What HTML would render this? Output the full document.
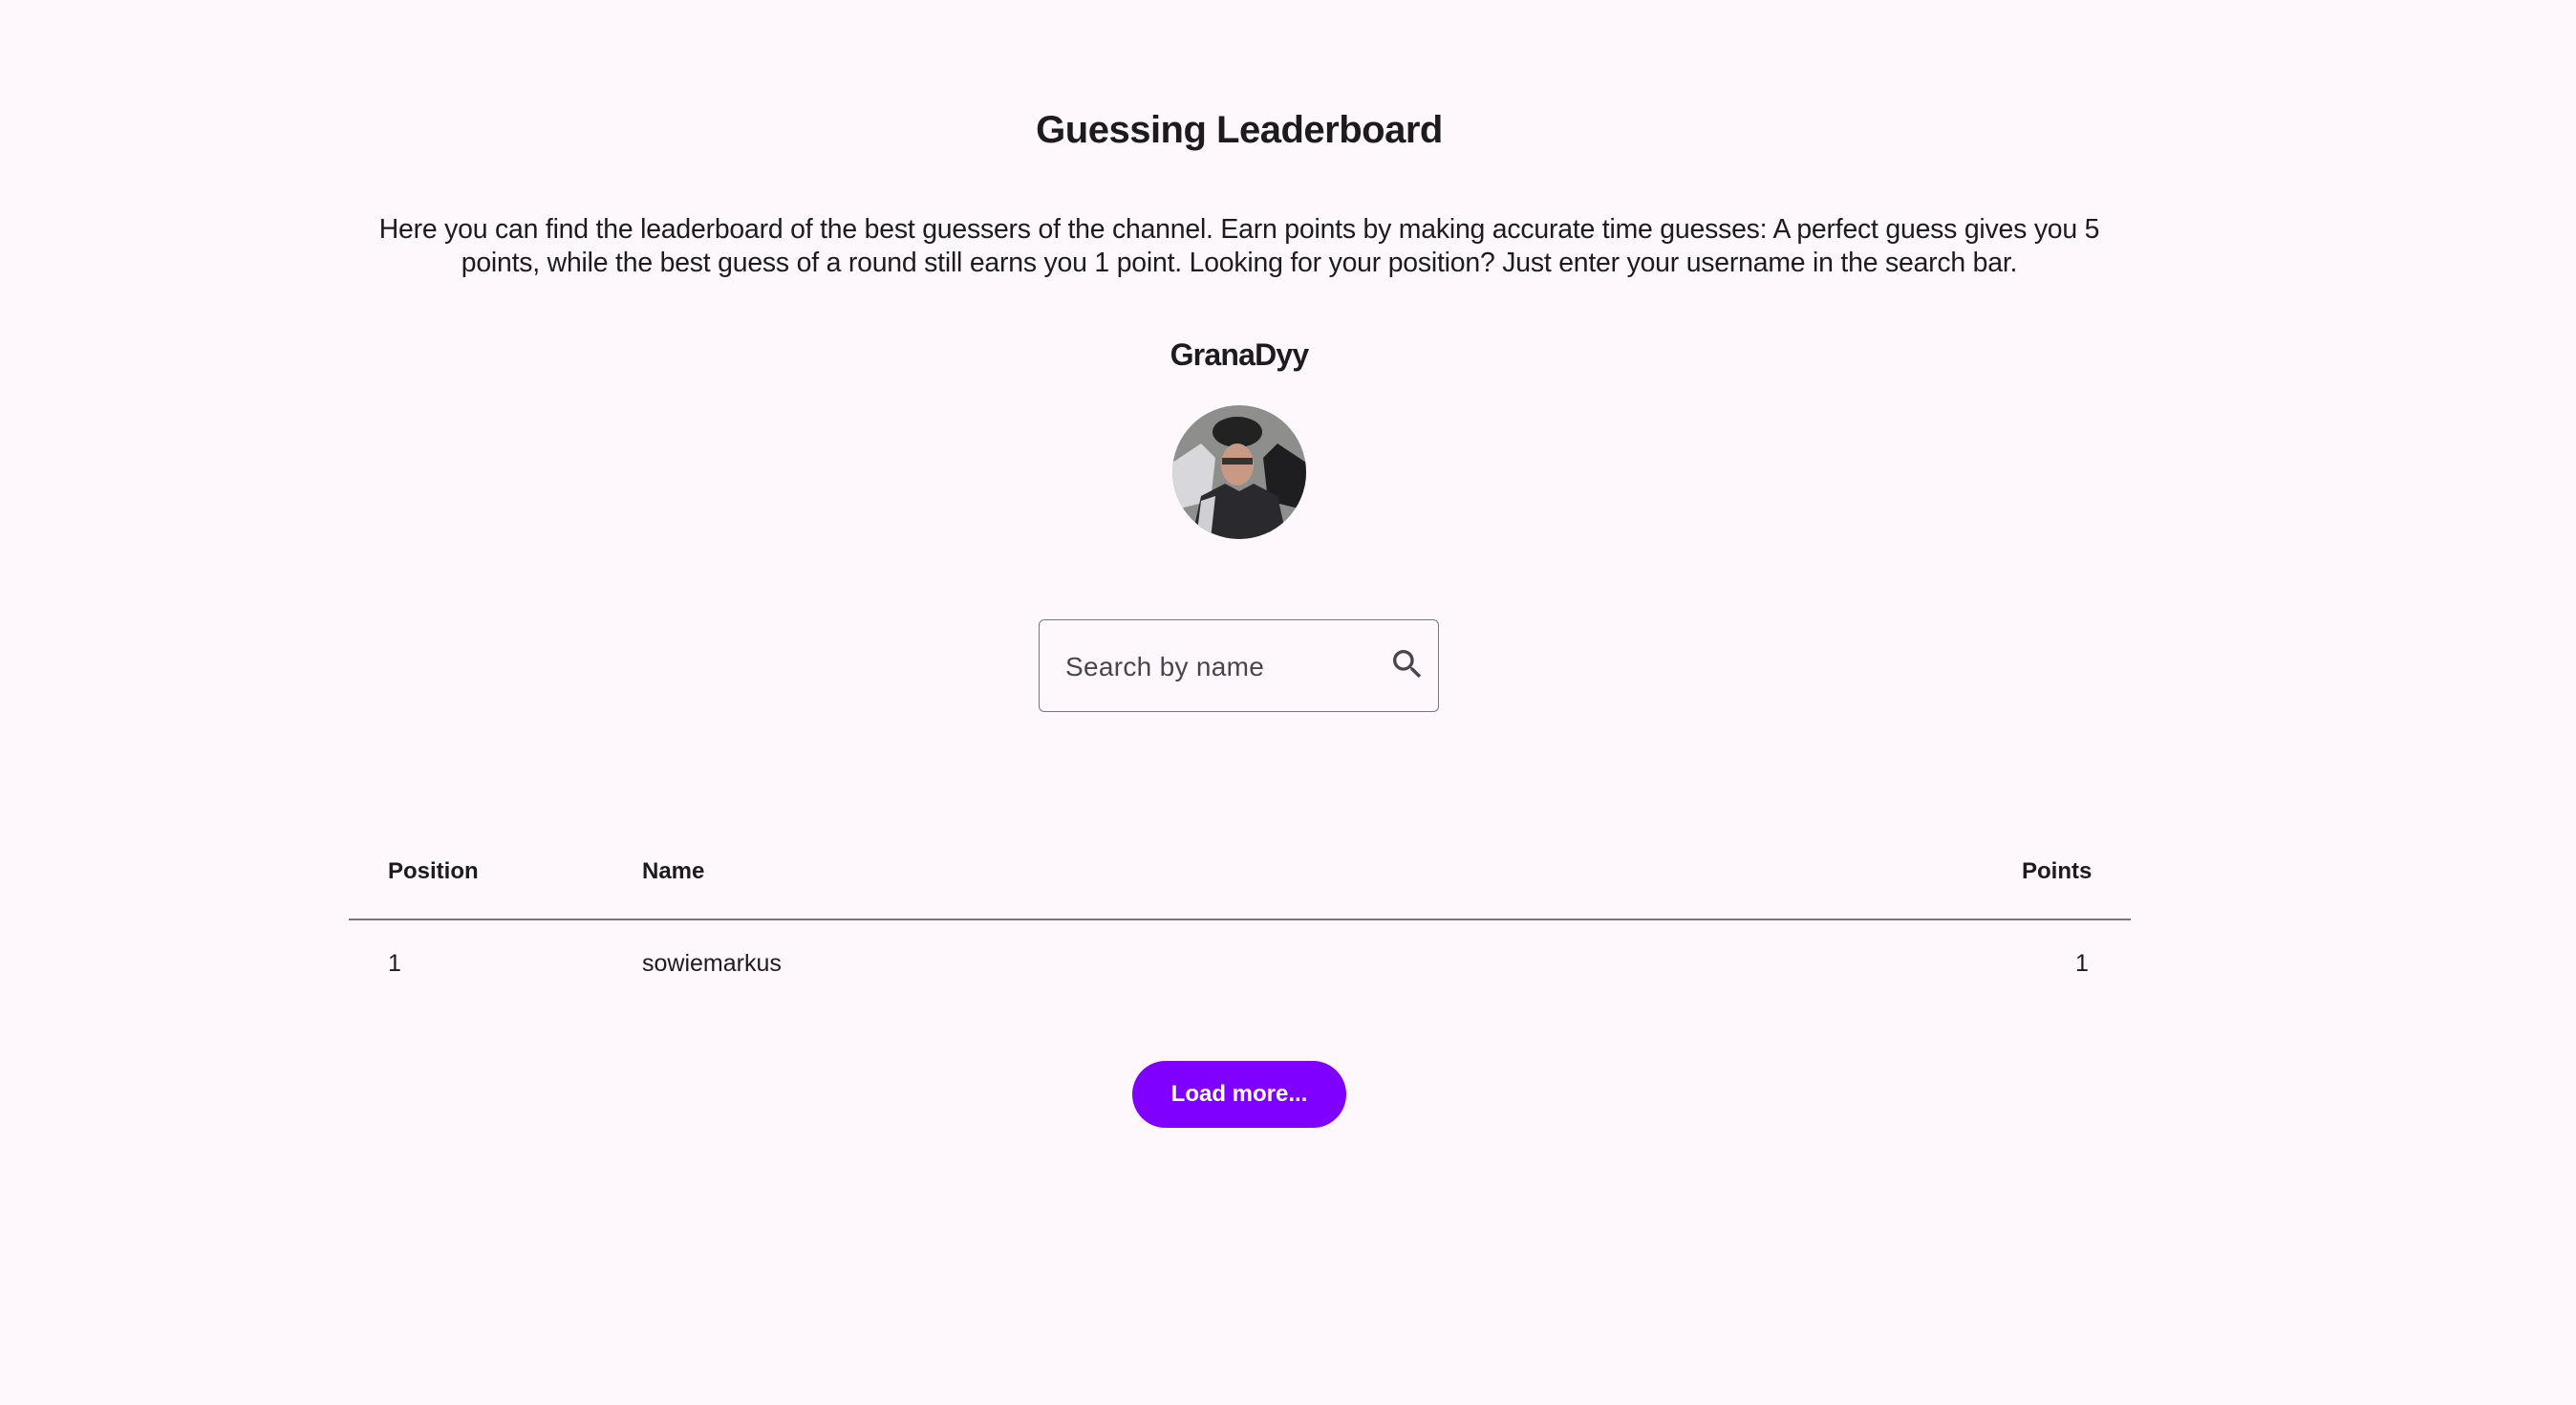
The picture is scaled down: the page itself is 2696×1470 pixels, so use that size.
<!DOCTYPE html>
<html><head><meta charset="utf-8"><style>
html,body{margin:0;padding:0;background:#fef7fb;width:2696px;height:1470px;overflow:hidden;font-family:"Liberation Sans",sans-serif;color:#1d1b20}
.abs{position:absolute}
h1{position:absolute;left:0;width:2594px;top:114px;margin:0;text-align:center;font-size:40px;font-weight:bold;letter-spacing:-0.5px}
.p{position:absolute;left:0;width:2594px;top:223px;text-align:center;font-size:28.4px;line-height:35px;letter-spacing:-0.2px}
.name{position:absolute;left:0;width:2594px;top:353px;text-align:center;font-size:32px;font-weight:bold;letter-spacing:-0.8px}
.search{position:absolute;left:1087px;top:648px;width:419px;height:97px;border:1.5px solid #79747e;border-radius:6px;box-sizing:border-box}
.search span{position:absolute;left:27px;top:33px;font-size:28px;color:#49454f;letter-spacing:0.3px}
.th{position:absolute;top:898px;font-size:24px;font-weight:bold}
.td{position:absolute;top:994px;font-size:25px}
.btn{position:absolute;left:1185px;top:1110px;width:224px;height:70px;border-radius:35px;background:#7f00ff;color:#fff;font-size:24px;font-weight:bold;text-align:center;line-height:70px}
</style></head><body>
<h1>Guessing Leaderboard</h1>
<div class="p">Here you can find the leaderboard of the best guessers of the channel. Earn points by making accurate time guesses: A perfect guess gives you 5<br>points, while the best guess of a round still earns you 1 point. Looking for your position? Just enter your username in the search bar.</div>
<div class="name">GranaDyy</div>
<svg class="abs" style="left:1227px;top:424px" width="140" height="140" viewBox="0 0 140 140">
<defs><clipPath id="c"><circle cx="70" cy="70" r="70"/></clipPath></defs>
<g clip-path="url(#c)">
<rect width="140" height="140" fill="#8e8e8c"/>
<path d="M0 60 L30 40 L45 55 L40 100 L0 110Z" fill="#d8d8dc"/>
<path d="M140 60 L110 40 L95 55 L100 100 L140 110Z" fill="#1e1e20"/>
<ellipse cx="68" cy="28" rx="26" ry="16" fill="#222"/>
<ellipse cx="68" cy="62" rx="17" ry="22" fill="#c89a86"/>
<rect x="52" y="55" width="32" height="7" fill="#333"/>
<path d="M20 140 L30 95 L55 82 L70 90 L85 82 L110 95 L120 140Z" fill="#2a2a2e"/>
<path d="M25 140 L30 100 L45 95 L40 140Z" fill="#cfcfd4"/>
</g></svg>
<div class="search"><span>Search by name</span>
<svg class="abs" style="left:365px;top:26px" width="40" height="40" viewBox="0 0 24 24"><path fill="#49454f" d="M15.5 14h-.79l-.28-.27A6.47 6.47 0 0 0 16 9.5 6.5 6.5 0 1 0 9.5 16c1.61 0 3.090-.59 4.23-1.57l.27.28v.79l5 4.99L20.49 19l-4.99-5zm-6 0C7.01 14 5 11.99 5 9.5S7.01 5 9.5 5 14 7.01 14 9.5 11.990 14 9.5 14z"/></svg>
</div>
<div class="th" style="left:406px">Position</div>
<div class="th" style="left:672px">Name</div>
<div class="th" style="left:2116px">Points</div>
<div class="abs" style="left:365px;top:961px;width:1865px;height:2px;background:#79747e"></div>
<div class="td" style="left:406px">1</div>
<div class="td" style="left:672px">sowiemarkus</div>
<div class="td" style="left:2172px">1</div>
<div class="btn">Load more...</div>
</body></html>
